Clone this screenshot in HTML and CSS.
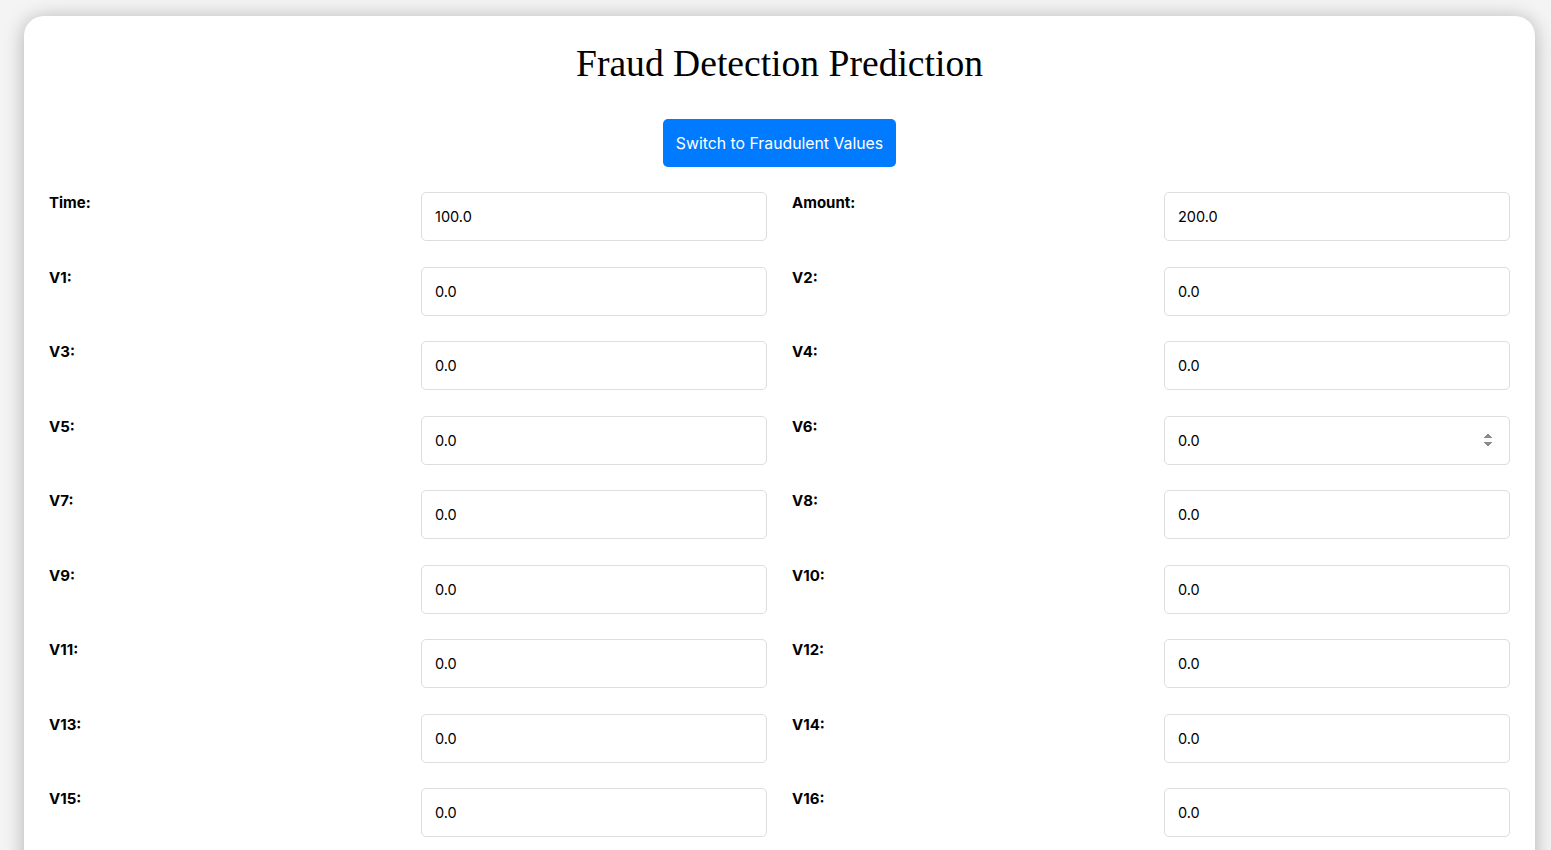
FILE: index.html
```html
<!DOCTYPE html>
<html lang="en">
<head>
<meta charset="utf-8">
<title>Fraud Detection Prediction</title>
<link rel="stylesheet" href="styles.css">
</head>
<body>
<div class="card">
  <h1 class="title">Fraud Detection Prediction</h1>
  <div class="actions">
    <button class="switch-btn" type="button">Switch to Fraudulent Values</button>
  </div>
  <form class="form-grid">
    <div class="field"><label>Time:</label><input type="number" value="100.0"></div>
    <div class="field"><label>Amount:</label><input type="number" value="200.0"></div>
    <div class="field"><label>V1:</label><input type="number" value="0.0"></div>
    <div class="field"><label>V2:</label><input type="number" value="0.0"></div>
    <div class="field"><label>V3:</label><input type="number" value="0.0"></div>
    <div class="field"><label>V4:</label><input type="number" value="0.0"></div>
    <div class="field"><label>V5:</label><input type="number" value="0.0"></div>
    <div class="field"><label>V6:</label><input class="hovered" type="number" value="0.0"></div>
    <div class="field"><label>V7:</label><input type="number" value="0.0"></div>
    <div class="field"><label>V8:</label><input type="number" value="0.0"></div>
    <div class="field"><label>V9:</label><input type="number" value="0.0"></div>
    <div class="field"><label>V10:</label><input type="number" value="0.0"></div>
    <div class="field"><label>V11:</label><input type="number" value="0.0"></div>
    <div class="field"><label>V12:</label><input type="number" value="0.0"></div>
    <div class="field"><label>V13:</label><input type="number" value="0.0"></div>
    <div class="field"><label>V14:</label><input type="number" value="0.0"></div>
    <div class="field"><label>V15:</label><input type="number" value="0.0"></div>
    <div class="field"><label>V16:</label><input type="number" value="0.0"></div>
    <div class="field"><label>V17:</label><input type="number" value="0.0"></div>
    <div class="field"><label>V18:</label><input type="number" value="0.0"></div>
  </form>
</div>
</body>
</html>
```

FILE: styles.css
```css
html, body {
  margin: 0;
}
body {
  background: #f4f4f4;
  padding: 16px 16px 0 24px;
  font-family: "Inter", "Open Sans", sans-serif;
  color: #000;
}
.card {
  background: #fff;
  border-radius: 20px;
  padding: 25px;
  box-shadow: 0 2px 20px rgba(0, 0, 0, 0.28);
}
.title {
  font-family: "Liberation Serif", "Times New Roman", serif;
  font-weight: normal;
  font-size: 37.6px;
  text-align: center;
  margin: 0 0 32px;
  line-height: 46px;
}
.actions {
  display: flex;
  justify-content: center;
  margin-bottom: 25px;
}
.switch-btn {
  background: #007bff;
  color: #fff;
  border: none;
  border-radius: 5px;
  height: 48px;
  padding: 0 13px;
  font-family: inherit;
  font-size: 15.8px;
}
.form-grid {
  display: grid;
  grid-template-columns: 1fr 1fr;
  column-gap: 25px;
  row-gap: 25.5px;
}
.field {
  display: grid;
  grid-template-columns: 1fr 346px;
  align-items: start;
}
.field label {
  font-weight: 700;
  font-size: 15px;
  line-height: 20px;
  padding-top: 1px;
}
.field input {
  box-sizing: border-box;
  height: 49px;
  width: 100%;
  padding: 0 13px;
  border: 1px solid #ddd;
  border-radius: 5px;
  font-family: inherit;
  font-size: 14.5px;
  color: #000;
  background: #fff;
}
.field input::-webkit-inner-spin-button,
.field input::-webkit-outer-spin-button {
  opacity: 0;
}
.field input.hovered::-webkit-inner-spin-button {
  opacity: 1;
}
```
